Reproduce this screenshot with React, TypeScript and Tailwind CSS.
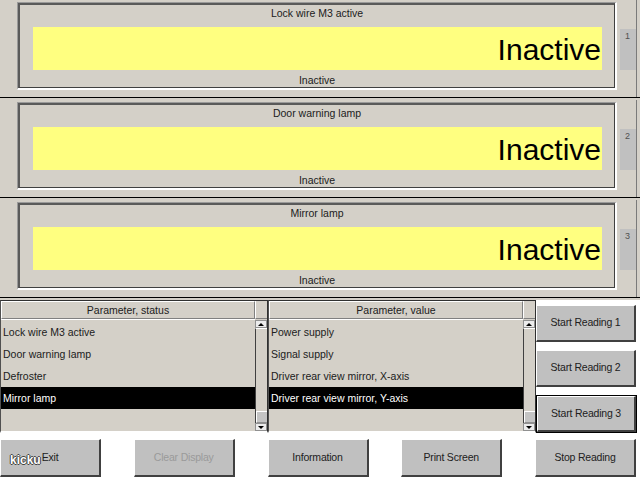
import React from "react";

function Panel({ title, n }: { title: string; n: number }) {
  return (
    <div className="flex h-[100px] flex-col">
      <div className="flex h-[97px]">
        <div className="w-[17px]" />
        <div className="mt-[2px] h-[88px] w-[600px] border-t border-l border-t-[#9a9a9a] border-l-[#9a9a9a] border-b-2 border-r-2 border-b-white border-r-white">
          <div className="flex h-full flex-col border-t-2 border-l-2 border-t-[#5a5a5a] border-l-[#5a5a5a] border-b border-r border-b-[#404040] border-r-[#404040]">
            <div className="h-[16px] text-center text-[10.5px] leading-[16px] text-[#202020]">{title}</div>
            <div className="mt-[6px] ml-[13px] mr-[12px] flex h-[43px] items-center justify-end bg-[#ffff80] pr-[1px] pt-[1px] text-[30px] leading-[43px] text-black">
              Inactive
            </div>
            <div className="flex flex-1 items-end justify-center text-[10.5px] leading-[14px] text-[#202020]">Inactive</div>
          </div>
        </div>
        <div className="flex w-[20px] border-r border-r-[#7a7a7a] pl-[3px]">
          <div className="mt-[29px] h-[41px] w-[16px] bg-[#c0c0c0] pl-[5px] pt-[1px] text-[9px] leading-[12px] text-[#505050]">
            {n}
          </div>
        </div>
        <div className="w-[3px]" />
      </div>
      <div className="h-px bg-black" />
      <div className="h-[2px]" />
    </div>
  );
}

function ScrollBar() {
  return (
    <div className="flex w-[12px] flex-col">
      <div className="h-[18px] border-b border-b-[#808080] border-l border-l-white" />
      <div className="mt-[1px] flex h-[8px] items-center justify-center border border-[#909090] bg-[#ececec]">
        <div className="h-0 w-0 border-x-[3px] border-b-[3px] border-x-transparent border-b-black" />
      </div>
      <div className="flex flex-1 flex-col justify-end border-l border-l-[#404040] border-t border-t-white bg-[#d4d0c8]">
        <div className="h-[12px] border-t border-l border-t-white border-l-white border-b border-b-[#909090] bg-[#c4c4c4]" />
      </div>
      <div className="flex h-[8px] items-center justify-center border border-[#909090] bg-[#ececec]">
        <div className="h-0 w-0 border-x-[3px] border-t-[3px] border-x-transparent border-t-black" />
      </div>
    </div>
  );
}

function List({ header, items, selected }: { header: string; items: string[]; selected: number }) {
  return (
    <div className="flex h-[133px] w-[268px] border-t border-l border-t-[#303030] border-l-[#505050] border-b-2 border-b-white border-r border-r-[#303030]">
      <div className="flex w-[254px] flex-col">
        <div className="h-[18px] border-t border-l border-t-white border-l-white border-b border-r border-b-[#808080] border-r-[#808080] text-center text-[10.5px] leading-[16px] text-[#202020]">
          {header}
        </div>
        <div className="h-px bg-white" />
        <div className="flex flex-1 flex-col pt-[1px]">
          {items.map((it, i) => (
            <div
              key={it}
              className={
                i === selected
                  ? "h-[22px] bg-black pl-[2px] text-[10.5px] leading-[22px] text-white"
                  : "h-[22px] pl-[2px] text-[10.5px] leading-[22px] text-[#202020]"
              }
            >
              {it}
            </div>
          ))}
        </div>
      </div>
      <ScrollBar />
    </div>
  );
}

function Btn({ label, disabled, def }: { label: string; disabled?: boolean; def?: boolean }) {
  const inner = (
    <div
      className={
        "flex h-full w-full items-center justify-center border-t border-l border-t-white border-l-white border-b-2 border-r-2 border-b-[#404040] border-r-[#404040] bg-[#c0c0c0] text-[10.5px] tracking-[-0.2px] " +
        (disabled ? "text-[#9a9a9a]" : "text-[#202020]")
      }
    >
      {label}
    </div>
  );
  return def ? <div className="h-full w-full border border-black">{inner}</div> : inner;
}

export default function App() {
  return (
    <div className="relative flex h-[480px] w-[640px] flex-col overflow-hidden bg-[#d4d0c8] font-['Liberation_Sans',Arial,sans-serif]">
      <Panel title="Lock wire M3 active" n={1} />
      <Panel title="Door warning lamp" n={2} />
      <Panel title="Mirror lamp" n={3} />
      <div className="flex h-[133px]">
        <List
          header="Parameter, status"
          items={["Lock wire M3 active", "Door warning lamp", "Defroster", "Mirror lamp"]}
          selected={3}
        />
        <List
          header="Parameter, value"
          items={["Power supply", "Signal supply", "Driver rear view mirror, X-axis", "Driver rear view mirror, Y-axis"]}
          selected={3}
        />
        <div className="flex flex-1 flex-col gap-[8px] bg-white pt-[5px]">
          <div className="h-[37px] w-[100px]">
            <Btn label="Start Reading 1" />
          </div>
          <div className="h-[37px] w-[100px]">
            <Btn label="Start Reading 2" />
          </div>
          <div className="h-[38px] w-[101px]">
            <Btn label="Start Reading 3" def />
          </div>
        </div>
      </div>
      <div className="flex h-[47px] justify-between bg-white pr-[4px] pt-[6px]">
        <div className="h-[38px] w-[101px]">
          <Btn label="Exit" />
        </div>
        <div className="h-[38px] w-[101px]">
          <Btn label="Clear Display" disabled />
        </div>
        <div className="h-[38px] w-[101px]">
          <Btn label="Information" />
        </div>
        <div className="h-[38px] w-[101px]">
          <Btn label="Print Screen" />
        </div>
        <div className="h-[38px] w-[101px]">
          <Btn label="Stop Reading" />
        </div>
      </div>
      <div className="absolute left-[10px] top-[451px] text-[12px] font-bold text-white [text-shadow:-1px_0_0_#444,1px_0_0_#444,0_1px_0_#444,0_-1px_0_#444]">
        kicku
      </div>
    </div>
  );
}
